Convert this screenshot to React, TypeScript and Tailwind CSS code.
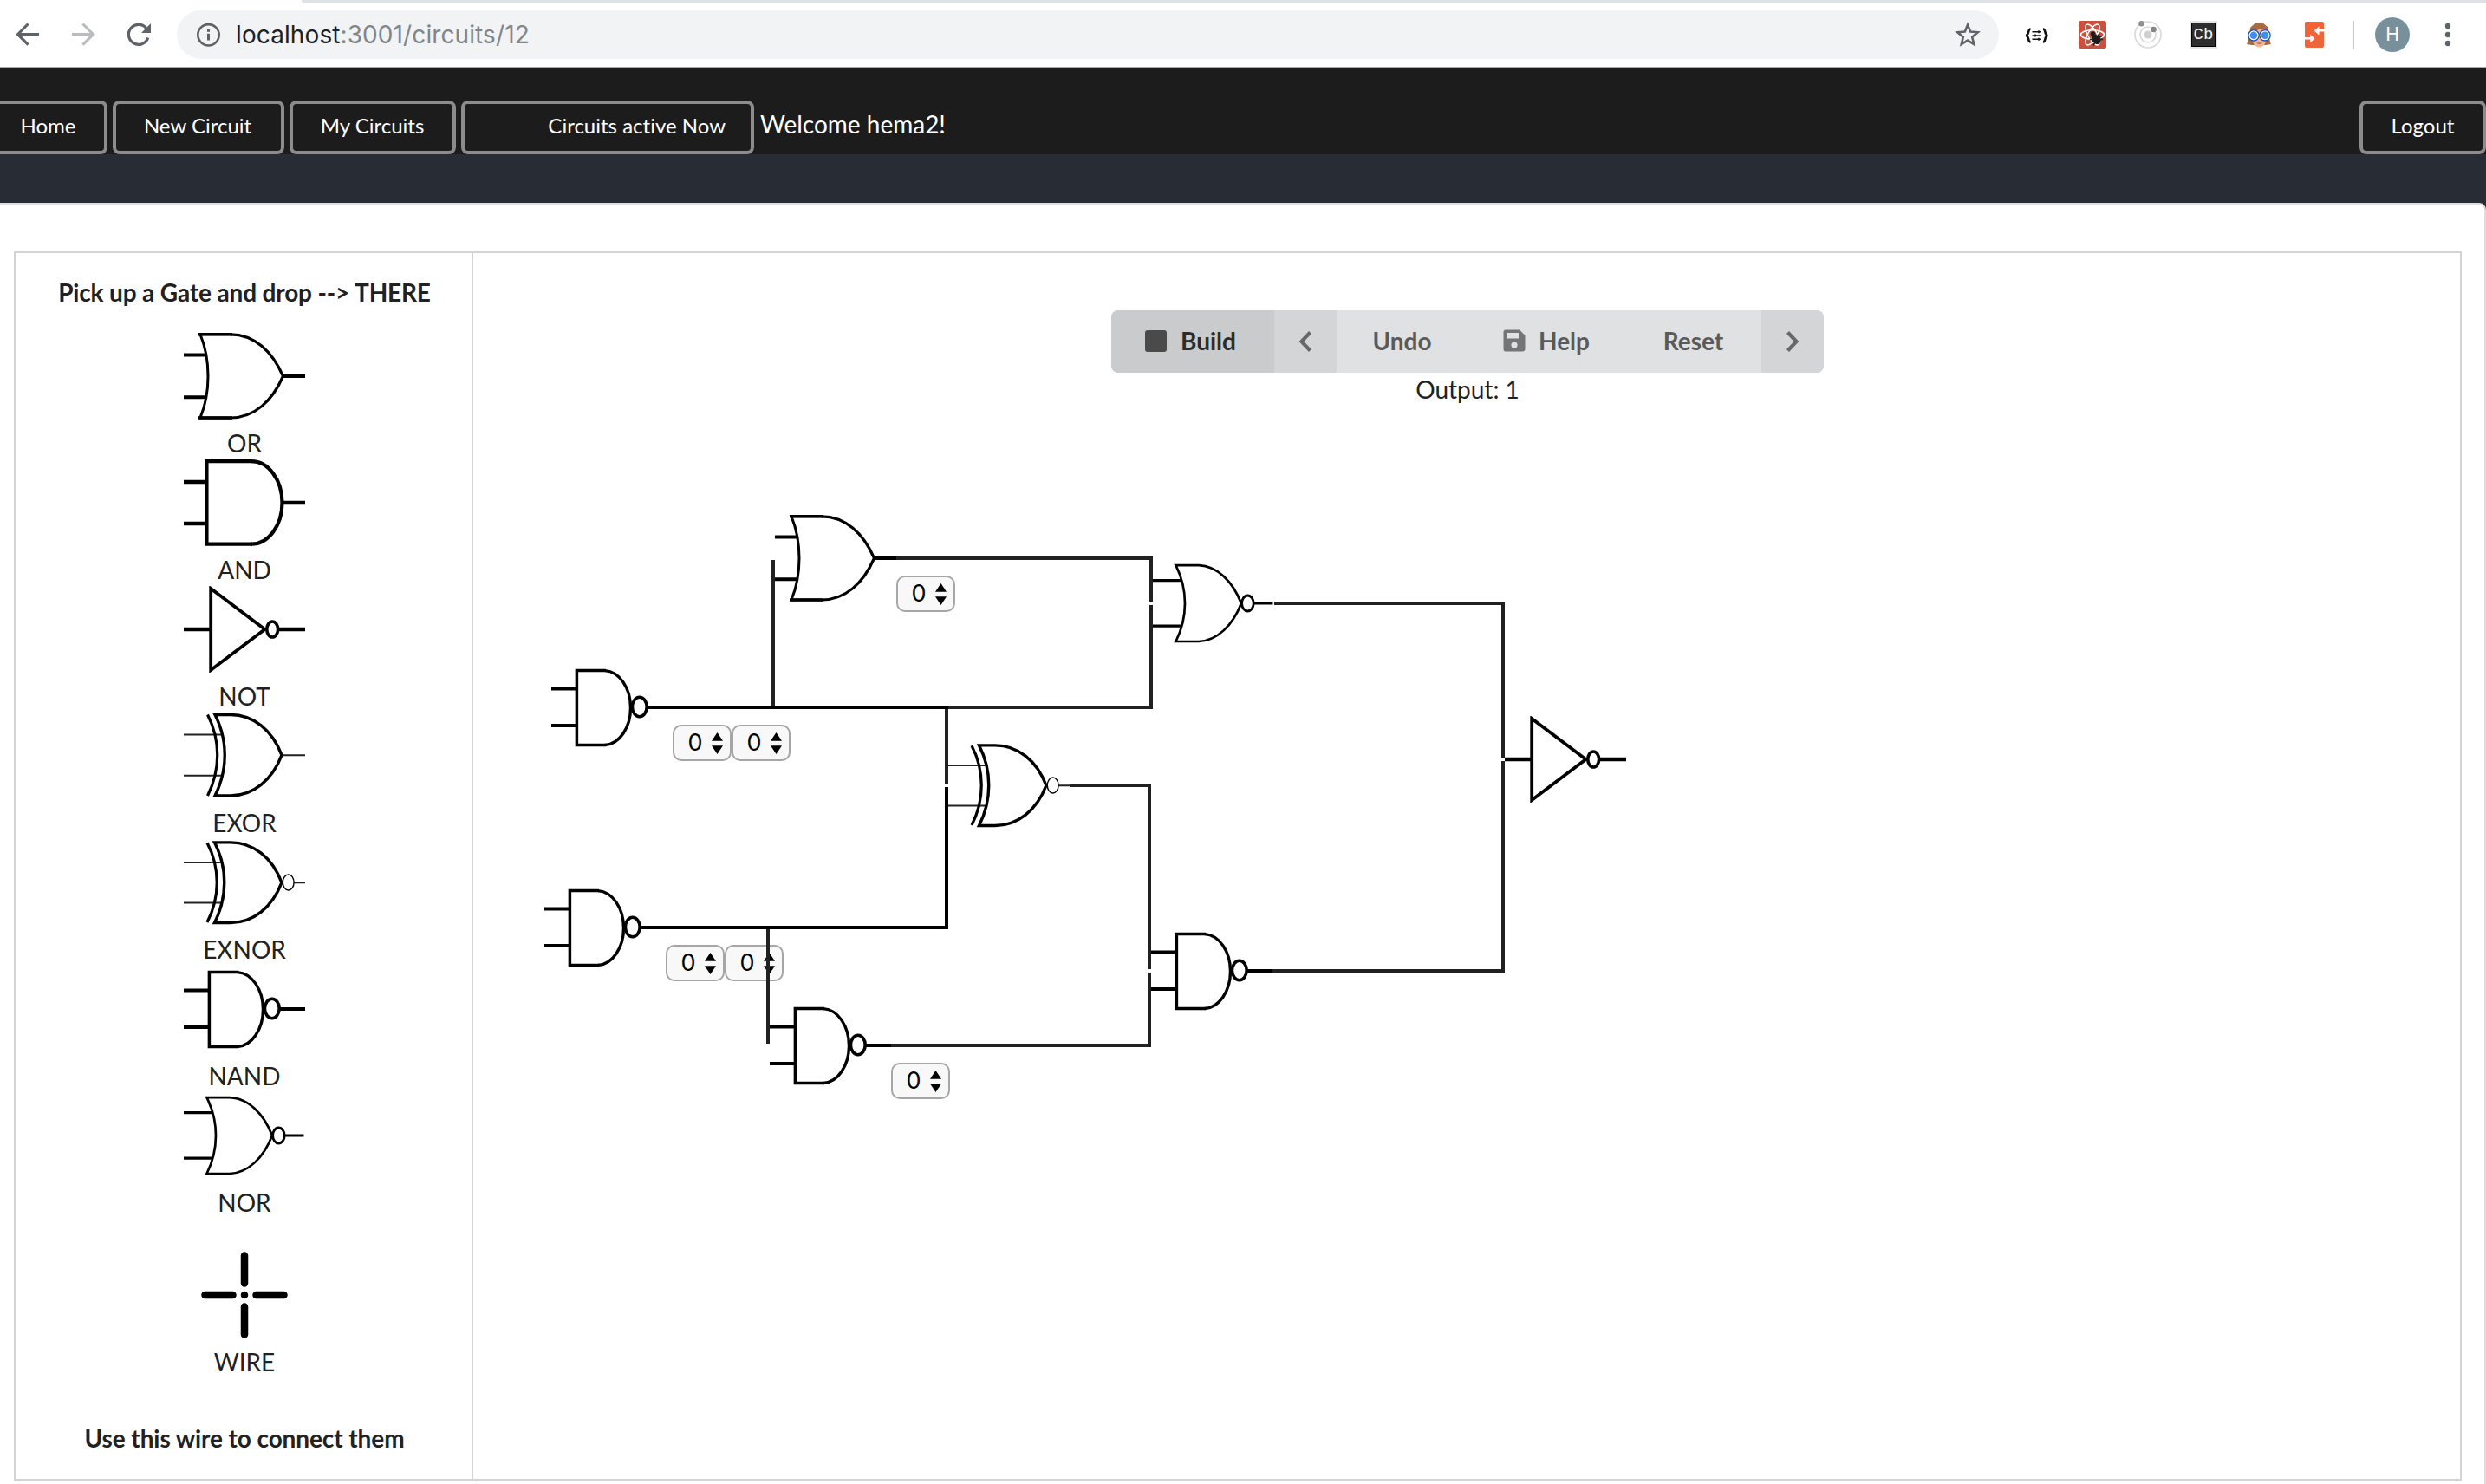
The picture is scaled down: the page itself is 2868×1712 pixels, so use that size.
import type { ReactNode } from "react";

type GateKind = "OR" | "AND" | "NOT" | "EXOR" | "EXNOR" | "NAND" | "NOR";

/* Every gate is drawn in a 140 x 100 box; pins touch the left and right edges. */
const gateShapes: Record<GateKind, ReactNode> = {
  OR: (
    <>
      <path d="M0 25.6H25.5M0 74.2H25.5M114 50H140" strokeWidth="4" />
      <path d="M54 1.8C81 1.8 102 21 114.5 50C102 79 81 98 54 98" strokeWidth="3.2" />
      <path d="M54 1.8H19C31 31 31 69 19 98H54" strokeWidth="3" />
      <path d="M17 1.8H56M17 98H56" strokeWidth="3.6" />
    </>
  ),
  AND: (
    <>
      <path d="M0 26H26M0 74H26M114 50H140" strokeWidth="4.6" />
      <path d="M79 2.2H26.4V97.6H79" strokeWidth="4.3" />
      <path d="M78 2.2A35.5 47.7 0 0 1 78 97.6" strokeWidth="4.2" />
    </>
  ),
  NOT: (
    <>
      <path d="M0 50H31M109 50H140" strokeWidth="4.6" />
      <path d="M31.2 3L93.5 50L31.2 97Z" strokeWidth="3.8" />
      <ellipse cx="102.2" cy="50" rx="6.4" ry="9" strokeWidth="3.6" />
    </>
  ),
  EXOR: (
    <>
      <path d="M0 25.5H44M0 72.7H44M113 49.2H140" strokeWidth="2" stroke="#222" />
      <path d="M27.5 2.5C42.5 32 42.5 66 27.5 96" strokeWidth="3.2" />
      <path d="M54 2.5C80 2.5 102 20 113 49.2C102 78 80 96 54 96H36C51 66 51 32 36 2.5Z" strokeWidth="3.4" />
    </>
  ),
  EXNOR: (
    <>
      <path d="M0 27H44M0 73.5H44M127 50.2H140" strokeWidth="2" stroke="#222" />
      <path d="M27 4.2C42 33 42 67 27 96" strokeWidth="3.2" />
      <path d="M54 3.9C80 3.9 102 21 113 50.2C102 79 80 96.5 54 96.5H35.5C50.5 67 50.5 33 35.5 3.9Z" strokeWidth="3.4" />
      <ellipse cx="120.7" cy="50" rx="6.4" ry="9" strokeWidth="1.4" />
    </>
  ),
  NAND: (
    <>
      <path d="M0 28.5H29M0 71H29M110 50H140" strokeWidth="4" />
      <path d="M63 7.6H29.4V93.5H63" strokeWidth="3.5" />
      <path d="M62 7.6A31 43 0 0 1 62 93.5" strokeWidth="3.4" />
      <ellipse cx="101.800" cy="49.5" rx="8.4" ry="11.2" strokeWidth="3.6" />
    </>
  ),
  NOR: (
    <>
      <path d="M0 23.6H33M0 76.2H33M117 50H138.5" strokeWidth="3.200" />
      <path d="M53 6.1C74 7 92 24 102 50C92 76 74 93 53 94H26.5C40.5 66 40.5 34 26.5 6.1Z" strokeWidth="2.7" />
      <ellipse cx="109.4" cy="50" rx="6.8" ry="9" strokeWidth="2.8" />
    </>
  ),
};

function Gate({ kind }: { kind: GateKind }) {
  return (
    <svg viewBox="0 0 140 100" className="h-[100px] w-[140px] shrink-0" fill="none" stroke="#000">
      {gateShapes[kind]}
    </svg>
  );
}

const palette: GateKind[] = ["OR", "AND", "NOT", "EXOR", "EXNOR", "NAND", "NOR"];

/* Positions are relative to the canvas' top left corner. */
const nodes: { kind: GateKind; x: number; y: number; inputs: number }[] = [
  { kind: "OR", x: 348, y: 302, inputs: 1 },
  { kind: "NAND", x: 90, y: 474, inputs: 2 },
  { kind: "NOR", x: 784, y: 354, inputs: 0 },
  { kind: "EXNOR", x: 548, y: 564, inputs: 0 },
  { kind: "NAND", x: 82, y: 728, inputs: 2 },
  { kind: "NAND", x: 342, y: 864, inputs: 1 },
  { kind: "NAND", x: 782, y: 778, inputs: 0 },
  { kind: "NOT", x: 1190, y: 534, inputs: 0 },
];

function InputSelect() {
  return (
    <div className="flex h-[42px] w-[68px] items-center rounded-[10px] border-2 border-[#a6a6a6] bg-[#f8f8f8] pl-[15px]">
      <span className="w-[18px] pb-px text-center font-['Inter',sans-serif] text-[27px] leading-none text-black">0</span>
      <svg viewBox="0 0 13 25" className="ml-[9.500px] h-[25px] w-[13px]" fill="#000">
        <path d="M6.5 0L13 9.800H0ZM6.5 25L13 15.200H0Z" />
      </svg>
    </div>
  );
}

function Wires() {
  return (
    <svg viewBox="0 0 2292 1414" className="pointer-events-none absolute top-0 left-0 h-[1414px] w-[2292px]" fill="none" strokeWidth="4">
      <g stroke="#212121">
        <path d="M488 352H782V402" />
        <path d="M346 354V524" />
        <path d="M548 524H782V406" />
        <path d="M546 526V612" />
        <path d="M340 780V912" />
        <path d="M688 614H780V826" />
        <path d="M482 914H780V830" />
        <path d="M924 404H1188V582" />
        <path d="M922 828H1188V586" />
      </g>
      <g stroke="#000">
        <path d="M230 524H548" />
        <path d="M222 778H546V616" />
      </g>
    </svg>
  );
}

function Extensions() {
  return (
    <div className="flex items-center gap-8">
      <svg viewBox="0 0 32 32" className="size-8" fill="none" stroke="#111" strokeWidth="2.6">
        <path d="M8.500 9.5C5 9.5 7.5 16.8 3 17C7.5 17.2 5 24.5 8.500 24.5M23 9.5C26.500 9.5 24 16.8 28.500 17C24 17.2 26.500 24.5 23 24.5" />
        <path d="M10.500 12.800H21M10.500 17H21M10.500 21.200H21" strokeWidth="1.5" />
        <path d="M18 11.300V14.300M14 15.500V18.500M18 19.700V22.700" strokeWidth="1.6" />
      </svg>
      <svg viewBox="0 0 32 32" className="size-8">
        <rect width="32" height="32" rx="2.500" fill="#c9513f" />
        <g fill="none" stroke="#fff" strokeWidth="1.500">
          <ellipse cx="16" cy="16" rx="13.500" ry="5.200" />
          <ellipse cx="16" cy="16" rx="13.500" ry="5.200" transform="rotate(60 16 16)" />
          <ellipse cx="16" cy="16" rx="13.500" ry="5.200" transform="rotate(120 16 16)" />
        </g>
        <g transform="rotate(-32 19 20)" fill="#1c1c1c" stroke="#1c1c1c">
          <ellipse cx="19.500" cy="22" rx="4.500" ry="6" stroke="none" />
          <circle cx="19.500" cy="14.500" r="2.800" stroke="none" />
          <path d="M13 18L26 26M26 18L13 26M12.500 22H26.500" strokeWidth="1.700" />
        </g>
      </svg>
      <svg viewBox="0 0 32 32" className="size-8" fill="none" stroke="#dadada" strokeWidth="1.700">
        <circle cx="16" cy="16" r="15" />
        <circle cx="16" cy="16" r="9" />
        <circle cx="16" cy="16" r="4.500" fill="#d0d0d0" stroke="none" />
        <circle cx="8.500" cy="3.300" r="3.300" fill="#8f8f8f" stroke="none" />
        <circle cx="22.500" cy="10" r="3.300" fill="#858585" stroke="none" />
      </svg>
      <div className="flex size-8 items-center justify-center border-2 border-[#e6e6e6] bg-[#2d2d2d] font-['Liberation_Mono',monospace] text-[19px] leading-none text-[#f2f2f2] outline-1 -outline-offset-3 outline-black">
        Cb
      </div>
      <svg viewBox="0 0 32 32" className="size-8">
        <path d="M2 27C5 22 3 2 16.500 2C30 2 27 22 30 27L24 28H8Z" fill="#a56c42" />
        <path d="M7 14C7 8 26 8 26 14C26 24 22 30.500 16.500 30.500C11 30.500 7 24 7 14Z" fill="#f0b592" />
        <path d="M6 13C14 12 18 9 20 6C21 10 24 12 27 13V8C22 2 11 2 6 8Z" fill="#a56c42" />
        <path d="M13 25.500Q16.500 28 20 25.500Z" fill="#a8524a" />
        <g stroke="#1a4fa8" strokeWidth="1.300">
          <circle cx="10" cy="16.800" r="6.200" fill="#fff" />
          <circle cx="23" cy="16.800" r="6.200" fill="#fff" />
        </g>
        <circle cx="10" cy="16.800" r="4.300" fill="#3d8df5" />
        <circle cx="23" cy="16.800" r="4.300" fill="#3d8df5" />
      </svg>
      <svg viewBox="0 0 32 32" className="size-8">
        <rect x="5" y="1" width="22" height="30" rx="2" fill="#ef6438" />
        <path d="M27 10H21.500V6.500L15.500 11.500L21.500 16.500V12.500H27ZM5 19H11V15.500L16.500 20.500L11 25.500V21.500H5Z" fill="#fff" />
      </svg>
    </div>
  );
}

function BrowserBar() {
  return (
    <div className="flex h-[78px] flex-col border-b border-[#a9a9aa] bg-white">
      <div className="h-1 shrink-0 pl-[348px]">
        <div className="h-1 rounded-bl-[10px] bg-[#dee1e6]" />
      </div>
      <div className="flex h-[72px] items-center">
        <svg viewBox="0 0 204 72" className="h-[72px] w-[204px] shrink-0" fill="none" strokeWidth="3.2">
          <path d="M45 35.700H21M32.500 23.500L20.500 35.700L32.500 47.700" stroke="#5f6368" />
          <path d="M83 35.700H107M95.500 23.500L107.500 35.700L95.500 47.700" stroke="#babcbe" />
          <path d="M169.500 29.500A11.500 11.500 0 1 0 170.800 39.500" stroke="#5f6368" />
          <path d="M174 23V34H163Z" fill="#5f6368" />
        </svg>
        <div className="flex h-14 w-[2102px] shrink-0 items-center rounded-full bg-[#f1f3f4] pr-[21px] pl-[23px]">
          <svg viewBox="0 0 28 28" className="size-7 shrink-0" fill="none" stroke="#5f6368" strokeWidth="2.600">
            <circle cx="13.500" cy="14.300" r="12.200" />
            <path d="M13.500 12.800V20.500" strokeWidth="3" />
            <path d="M13.500 8V10.800" strokeWidth="3" />
          </svg>
          <span className="ml-[17px] flex-1 font-['Inter',sans-serif] text-[28px] leading-none tracking-[0.1px] text-[#80868b]">
            <span className="text-[#202124]">localhost</span>:3001/circuits/12
          </span>
          <svg viewBox="0 0 30 30" className="size-[30px]" fill="none" stroke="#5f6368" strokeWidth="2.600">
            <path d="M15 3.800L18.200 11.600L26.700 12.300L20.200 17.800L22.200 26L15 21.600L7.800 26L9.800 17.800L3.300 12.300L11.800 11.600Z" />
          </svg>
        </div>
        <div className="ml-7">
          <Extensions />
        </div>
        <div className="ml-7 h-8 w-0.5 bg-[#c9cbce]" />
        <div className="ml-6 flex size-10 items-center justify-center rounded-full bg-[#78909c] font-['Roboto',sans-serif] text-[22px] leading-none text-white">
          H
        </div>
        <svg viewBox="0 0 8 28" className="ml-10 h-7 w-2" fill="#5f6368">
          <circle cx="4" cy="4" r="3.200" />
          <circle cx="4" cy="14" r="3.200" />
          <circle cx="4" cy="24" r="3.200" />
        </svg>
      </div>
    </div>
  );
}

function NavBar() {
  return (
    <nav className="flex h-[100px] items-end bg-[#1c1c1c] text-2xl leading-none text-white">
      <div className="flex h-[62px] w-[124px] items-center rounded-r-lg border-4 border-l-0 border-[#8c8c8c] pb-1 pl-[23.500px]">Home</div>
      <div className="ml-1.5 flex h-[62px] w-[198px] items-center justify-center rounded-lg border-4 border-[#8c8c8c] pr-0.5 pb-1">New Circuit</div>
      <div className="ml-1.5 flex h-[62px] w-[192px] items-center justify-center rounded-lg border-4 border-[#8c8c8c] pr-px pb-1">My Circuits</div>
      <div className="ml-1.5 flex h-[62px] w-[338px] items-center justify-end rounded-lg border-4 border-[#8c8c8c] pr-[29px] pb-1">Circuits active Now</div>
      <div className="ml-[7px] flex h-[62px] flex-1 items-center pb-2 text-[28px]">Welcome hema2!</div>
      <div className="flex h-[62px] w-[146px] items-center justify-center rounded-lg border-4 border-[#8c8c8c] pb-1">Logout</div>
    </nav>
  );
}

function Toolbar() {
  return (
    <div className="flex h-[72px] w-[822px] overflow-hidden rounded-lg bg-[#e0e1e2] text-[28px] leading-none font-bold text-[#5a5a5b]">
      <div className="flex w-[188px] items-center bg-[#cacbcd] pb-0.5 pl-[39px] text-[#2b2c2d]">
        <div className="mr-4 size-[25px] rounded-[3px] bg-[#4a4a4a]" />
        Build
      </div>
      <div className="flex w-[72px] items-center justify-center bg-[#d4d5d6]">
        <svg viewBox="0 0 16 26" className="h-[26px] w-4" fill="none" stroke="#666768" strokeWidth="4.200">
          <path d="M13.500 2.500L3.500 13L13.500 23.500" />
        </svg>
      </div>
      <div className="flex w-[152px] items-center justify-center pr-px pb-0.5">Undo</div>
      <div className="flex w-[180px] items-center justify-center pb-0.5">
        <svg viewBox="0 0 26 26" className="mr-[15px] h-[26px] w-[26px]">
          <path fillRule="evenodd" fill="#747576" d="M3 0.500H19L25.500 7V22.500Q25.500 25.500 22.500 25.500H3Q0.500 25.500 0.500 22.500V3.500Q0.500 0.500 3 0.500ZM4 4V10.500H18V4ZM13 14.500A3.600 3.600 0 1 0 13 21.700A3.600 3.600 0 1 0 13 14.500Z" />
        </svg>
        Help
      </div>
      <div className="flex w-[158px] items-center justify-center pb-0.5 pl-px">Reset</div>
      <div className="flex w-[72px] items-center justify-center bg-[#d4d5d6]">
        <svg viewBox="0 0 16 26" className="h-[26px] w-4" fill="none" stroke="#666768" strokeWidth="4.200">
          <path d="M2.500 2.500L12.500 13L2.500 23.500" />
        </svg>
      </div>
    </div>
  );
}

export default function App() {
  return (
    <div className="flex h-[1712px] w-[2868px] flex-col overflow-hidden bg-[#282c34] font-['Lato',sans-serif] text-[#212121] [font-variant-ligatures:none]">
      <BrowserBar />
      <NavBar />
      <main className="mt-14 flex-1 rounded-tr-lg border-t-2 border-r-2 border-[#dededf] bg-white pt-[54px] pl-4">
        <div className="flex h-[1418px] w-[2824px] border-2 border-[#d4d4d5]">
          <aside className="flex w-[528px] shrink-0 flex-col items-center border-r-2 border-[#d4d4d5] pl-0.5 text-[28px]">
            <div className="pt-7 pb-[30px] leading-[34px] font-bold tracking-[-0.15px]">Pick up a Gate and drop --&gt; THERE</div>
            {palette.map((kind) => (
              <div key={kind} className="flex flex-col items-center">
                <Gate kind={kind} />
                <div className="pt-2 leading-[38px]">{kind}</div>
              </div>
            ))}
            <svg viewBox="0 0 100 100" className="mt-[38px] size-[100px]" stroke="#000" strokeWidth="8.500" strokeLinecap="round">
              <path d="M50 4.500V36.500M50 63.500V95.500M4.500 50H36.500M63.500 50H95.500M50 50H50" />
            </svg>
            <div className="pt-2 leading-[38px]">WIRE</div>
            <div className="pt-[52px] leading-[34px] font-bold tracking-[-0.1px]">Use this wire to connect them</div>
          </aside>
          <section className="relative flex flex-1 flex-col items-center pt-[66px] pl-0.5">
            <Toolbar />
            <div className="text-[28px] leading-[38px]">Output: 1</div>
            {nodes.map((node) => (
              <div key={`${node.x}-${node.y}`} className="absolute flex" style={{ left: node.x, top: node.y }}>
                <Gate kind={node.kind} />
                <div className="flex pt-[70px]">
                  {Array.from({ length: node.inputs }, (_, i) => (
                    <InputSelect key={i} />
                  ))}
                </div>
              </div>
            ))}
            <Wires />
          </section>
        </div>
      </main>
    </div>
  );
}
